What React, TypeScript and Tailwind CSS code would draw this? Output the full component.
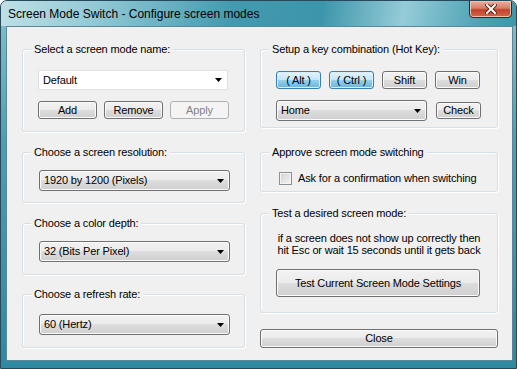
import React from "react";

const face =
  "rounded-[3px] border border-[#707070] bg-[linear-gradient(#f2f2f2_0%,#ebebeb_49%,#dddddd_50%,#cfcfcf_100%)] shadow-[inset_0_0_0_1px_#fbfbfb] text-black";
const btn = `flex items-center justify-center ${face}`;
const btnOn =
  "flex items-center justify-center rounded-[3px] border border-[#3c7fb1] bg-[linear-gradient(#e5f4fc_0%,#c4e5f6_49%,#98d1ef_50%,#68b3db_100%)] shadow-[inset_0_0_0_1px_#d8eefa] text-black";
const btnOff =
  "flex items-center justify-center rounded-[3px] border border-[#adb2b5] bg-[#f4f4f4] text-[#838383]";

function Arrow() {
  return (
    <svg width="7" height="4" viewBox="0 0 7 4" className="shrink-0">
      <path d="M0 0H7L3.5 4Z" fill="#000" />
    </svg>
  );
}

function Combo({ value, className }: { value: string; className: string }) {
  return (
    <div className={`flex items-center justify-between pl-[4px] pr-[5px] ${face} ${className}`}>
      <span>{value}</span>
      <Arrow />
    </div>
  );
}

function Group({
  title,
  className,
  inner,
  children,
}: {
  title: string;
  className: string;
  inner: string;
  children: React.ReactNode;
}) {
  return (
    <div className={`flex flex-col rounded-[3px] border border-[#d5dfe5] shadow-[inset_1px_1px_0_#fff,1px_1px_0_#fff] ${className}`}>
      <span className="-mt-[8px] ml-[8px] self-start bg-[#f0f0f0] px-[3px] leading-[15px]">{title}</span>
      <div className={`flex flex-col ${inner}`}>{children}</div>
    </div>
  );
}

export default function App() {
  return (
    <div className="relative w-[517px] h-[369px] overflow-hidden rounded-t-[7px] border border-[#27495a] bg-[linear-gradient(180deg,#86c2cf_0%,#4b9db2_40%,#2f89a1_100%)] font-['Liberation_Sans',Arial,sans-serif] text-black">
      {/* title bar */}
      <div className="flex h-[25px] items-start justify-between bg-[linear-gradient(100deg,#bfe0e6_0%,#93cad6_18%,#439aaf_45%,#3d95ab_62%,#95ccd7_78%,#52a4b7_92%,#3e95aa_100%)]">
        <span className="pl-[7px] pt-[6px] text-[12px] leading-[14px]">
          Screen Mode Switch - Configure screen modes
        </span>
        <div className="mr-[4px] mt-[-1px] flex h-[18px] w-[43px] items-center justify-center rounded-b-[4px] border border-[#521c12] bg-[linear-gradient(#eab2a4_0%,#d77c66_45%,#c2422a_55%,#d5684c_100%)] shadow-[inset_0_0_0_1px_#f0c0b2]">
          <svg width="12" height="10" viewBox="0 0 12 10">
            <path d="M2 1L10 9M10 1L2 9" stroke="#5a2418" strokeWidth="4" strokeLinecap="square" />
            <path d="M2 1L10 9M10 1L2 9" stroke="#fff" strokeWidth="2" strokeLinecap="square" />
          </svg>
        </div>
      </div>

      {/* client area */}
      <div className="ml-[5px] flex h-[335px] w-[507px] gap-[15px] border border-[#5b8797] bg-[#f0f0f0] pl-[15px] pr-[14px] pt-[22px] text-[11px] tracking-[-0.15px]">
        {/* left column */}
        <div className="flex w-[223px] flex-col">
          <Group title="Select a screen mode name:" className="h-[83px]" inner="px-[15px] pt-[13px]">
            <div className="flex h-[20px] w-[190px] items-center justify-between border border-[#dde1e6] bg-white pl-[4px] pr-[5px]">
              <span>Default</span>
              <Arrow />
            </div>
            <div className="mt-[11px] flex gap-[7px]">
              <div className={`${btn} h-[18px] w-[59px]`}>Add</div>
              <div className={`${btn} h-[18px] w-[59px]`}>Remove</div>
              <div className={`${btnOff} h-[18px] w-[59px]`}>Apply</div>
            </div>
          </Group>

          <Group title="Choose a screen resolution:" className="mt-[20px] h-[51px]" inner="pl-[16px] pt-[10px]">
            <Combo value="1920 by 1200 (Pixels)" className="h-[21px] w-[191px]" />
          </Group>

          <Group title="Choose a color depth:" className="mt-[20px] h-[52px]" inner="pl-[16px] pt-[10px]">
            <Combo value="32 (Bits Per Pixel)" className="h-[21px] w-[191px]" />
          </Group>

          <Group title="Choose a refresh rate:" className="mt-[19px] h-[54px]" inner="pl-[16px] pt-[12px]">
            <Combo value="60 (Hertz)" className="h-[21px] w-[191px]" />
          </Group>
        </div>

        {/* right column */}
        <div className="flex w-[238px] flex-col">
          <Group title="Setup a key combination (Hot Key):" className="h-[79px]" inner="px-[15px] pt-[14px]">
            <div className="flex gap-[8px]">
              <div className={`${btnOn} h-[18px] w-[45px]`}>( Alt )</div>
              <div className={`${btnOn} h-[18px] w-[45px]`}>( Ctrl )</div>
              <div className={`${btn} h-[18px] w-[45px]`}>Shift</div>
              <div className={`${btn} h-[18px] w-[45px]`}>Win</div>
            </div>
            <div className="mt-[11px] flex items-center gap-[9px]">
              <Combo value="Home" className="h-[21px] w-[151px]" />
              <div className={`${btn} h-[17px] w-[45px]`}>Check</div>
            </div>
          </Group>

          <Group title="Approve screen mode switching" className="mt-[24px] h-[40px]" inner="pl-[18px] pt-[10px]">
            <div className="flex items-center gap-[6px]">
              <div className="h-[13px] w-[13px] border border-[#8f8f8f] bg-[linear-gradient(135deg,#cfd3d8_0%,#f4f4f4_100%)] shadow-[inset_0_0_0_1px_#f4f4f4]" />
              <span>Ask for a confirmation when switching</span>
            </div>
          </Group>

          <Group title="Test a desired screen mode:" className="mt-[21px] h-[100px]" inner="px-[15px] pt-[11px]">
            <p className="text-center leading-[12px]">
              if a screen does not show up correctly then
              <br />
              hit Esc or wait 15 seconds until it gets back
            </p>
            <div className={`${btn} mt-[13px] h-[28px] w-[204px]`}>Test Current Screen Mode Settings</div>
          </Group>

          <div className={`${btn} mt-[16px] h-[19px] w-[238px]`}>Close</div>
        </div>
      </div>
    </div>
  );
}
